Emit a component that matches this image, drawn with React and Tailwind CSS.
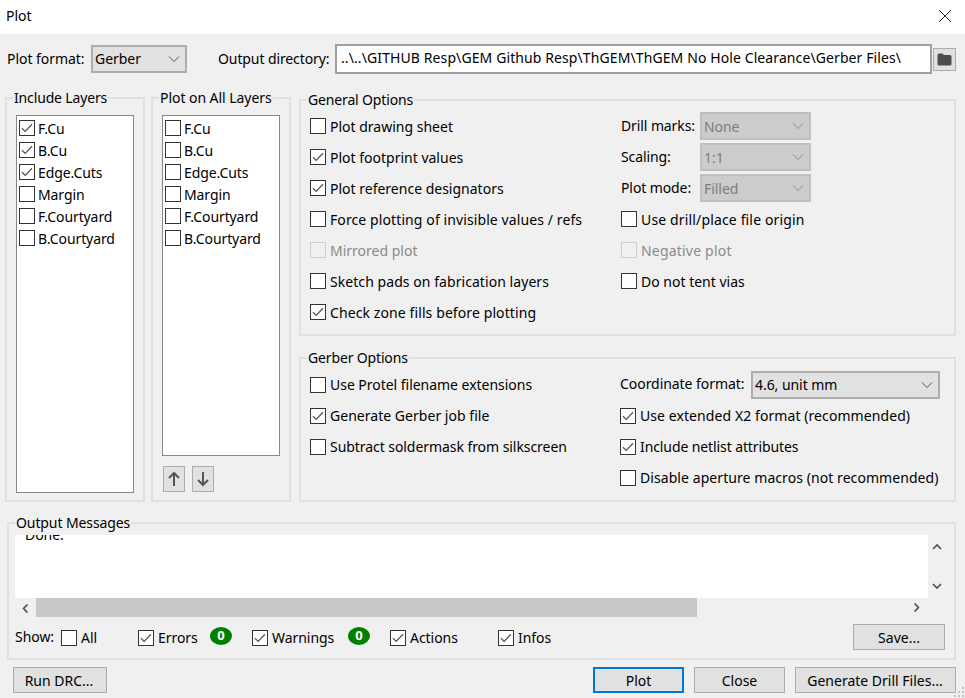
const Check = ({ checked, disabled }) => (
  <span className={`w-4 h-4 shrink-0 border flex items-center justify-center ${disabled ? "border-[#cfcfcf] bg-[#f0f0f0]" : "border-[#333333] bg-white"}`}>
    {checked && (
      <svg width="14" height="14" viewBox="0 0 14 14" fill="none">
        <path d="M2 7.2 L5.2 10.4 L12 3.2" stroke="#555555" strokeWidth="1.3" />
      </svg>
    )}
  </span>
);

const Opt = ({ label, checked, disabled, tc = "tracking-[0px]" }) => (
  <div className={`flex items-center gap-1 h-[30px] mb-[1px] whitespace-nowrap ${disabled ? "text-[#8a8a8a]" : ""}`}>
    <Check checked={checked} disabled={disabled} />
    <span className={tc}>{label}</span>
  </div>
);

const Chevron = ({ color = "#555555" }) => (
  <svg width="12" height="8" viewBox="0 0 12 8" fill="none">
    <path d="M1 1.5 L6 6.5 L11 1.5" stroke={color} strokeWidth="1" />
  </svg>
);

const ScrollChevron = () => (
  <svg width="10" height="6" viewBox="0 0 10 6" fill="none">
    <path d="M1 1 L5 5 L9 1" stroke="#505050" strokeWidth="1.7" />
  </svg>
);

const Select = ({ value, className = "", disabled }) => (
  <div className={`flex items-center justify-between h-7 border-2 pl-[2px] pr-[5px] ${disabled ? "bg-[#cccccc] border-[#bfbfbf] text-[#7d7d7d]" : "bg-[#e1e1e1] border-[#adadad]"} ${className}`}>
    <span className={disabled ? "" : "pb-[2px]"}>{value}</span>
    <Chevron color={disabled ? "#8f8f8f" : "#555555"} />
  </div>
);

const Button = ({ children, className = "" }) => (
  <div className={`flex items-center justify-center h-[26px] bg-[#e1e1e1] border border-[#adadad] tracking-[0px] ${className}`}>{children}</div>
);

const Group = ({ title, titleClass = "", className = "", children }) => (
  <div className={`relative border-2 border-[#e0e0e0] ${className}`}>
    <span className={`absolute top-[-8px] left-[6px] px-[1px] bg-[#f0f0f0] leading-[14px] whitespace-nowrap ${titleClass}`}>{title}</span>
    {children}
  </div>
);

const layers = ["F.Cu", "B.Cu", "Edge.Cuts", "Margin", "F.Courtyard", "B.Courtyard"];

const LayerList = ({ checked = [], className = "" }) => (
  <div className={`w-[118px] bg-white border border-[#828790] pl-[2px] pt-[1px] tracking-[-0.1px] ${className}`}>
    {layers.map((l, i) => (
      <div key={l} className="flex items-center gap-[3px] h-[22px] whitespace-nowrap">
        <Check checked={checked.includes(i)} />
        <span>{l}</span>
      </div>
    ))}
  </div>
);

const FilterCheck = ({ label, w, checked = true }) => (
  <div className={`flex items-center gap-1 shrink-0 h-6 mt-[2px] ${w}`}>
    <Check checked={checked} />
    <span className="pb-[2px]">{label}</span>
  </div>
);

const Badge = ({ w }) => (
  <div className={`shrink-0 mb-[2px] ${w}`}>
    <span className="flex items-center justify-center w-[22px] h-[18px] rounded-[50%] bg-[#008000] text-white text-[13px] font-bold">0</span>
  </div>
);

export default function App() {
  return (
    <div className="relative w-[965px] h-[698px] overflow-hidden flex flex-col bg-[#f0f0f0] text-black text-[14px] tracking-[-0.05px]" style={{ fontFamily: '"Noto Sans", sans-serif' }}>
      <div className="h-[34px] shrink-0 bg-white flex items-center justify-between pl-[6px] pr-[13px] pb-[3px]">
        <span>Plot</span>
        <svg width="14" height="14" viewBox="0 0 14 14" fill="none">
          <path d="M1 1 L13 13 M13 1 L1 13" stroke="#222222" strokeWidth="1" />
        </svg>
      </div>

      <div className="flex items-center h-[30px] mt-[10px] pl-[7px] shrink-0 whitespace-nowrap">
        <span className="w-[84px] pb-[2px]">Plot format:</span>
        <Select value="Gerber" className="w-[96px]" />
        <span className="ml-[31px] w-[117px] pb-[2px] tracking-[-0.1px]">Output directory:</span>
        <div className="w-[597px] h-[30px] bg-white border-2 border-[#a0a0a0] flex items-center pl-[4px] pb-[4px] tracking-[0.1px]">..\..\GITHUB Resp\GEM Github Resp\ThGEM\ThGEM No Hole Clearance\Gerber Files\</div>
        <div className="w-[23px] h-[23px] ml-[1px] bg-[#e1e1e1] border border-[#adadad] flex items-center justify-center">
          <svg width="15" height="13" viewBox="0 0 15 13"><path d="M0.5 2 Q0.5 0.5 2 0.5 H5.5 L7 2 H13 Q14.500 2 14.500 3.500 V11 Q14.500 12.500 13 12.500 H2 Q0.500 12.500 0.500 11 Z" fill="#4d4d4d" /></svg>
        </div>
      </div>

      <div className="flex pl-[5px] mt-[23px] h-[405px] shrink-0">
        <Group title="Include Layers" titleClass="tracking-[-0.15px]" className="w-[140px] h-full pl-[9px] pt-[16px]">
          <LayerList checked={[0, 1, 2]} className="h-[378px]" />
        </Group>
        <Group title="Plot on All Layers" className="w-[140px] h-full ml-[6px] pl-[9px] pt-[16px]">
          <LayerList className="h-[341px]" />
          <div className="flex gap-[7px] mt-[10px] ml-[1px]">
            <div className="w-[22px] h-[26px] bg-[#e1e1e1] border border-[#adadad] flex items-center justify-center"><svg width="14" height="16" viewBox="0 0 14 16" fill="none"><path d="M7 15 V2 M2 7 L7 2 L12 7" stroke="#555555" strokeWidth="2" /></svg></div>
            <div className="w-[22px] h-[26px] bg-[#e1e1e1] border border-[#adadad] flex items-center justify-center"><svg width="14" height="16" viewBox="0 0 14 16" fill="none"><path d="M7 1 V14 M2 9 L7 14 L12 9" stroke="#555555" strokeWidth="2" /></svg></div>
          </div>
        </Group>

        <div className="w-[657px] ml-[8px] pt-[2px] flex flex-col">
          <Group title="General Options" titleClass="tracking-[-0.15px]" className="h-[237px] pl-[9px] pt-[10px] flex">
            <div className="w-[311px]">
              <Opt label="Plot drawing sheet" />
              <Opt label="Plot footprint values" checked />
              <Opt label="Plot reference designators" checked />
              <Opt label="Force plotting of invisible values / refs" tc="tracking-[0.1px]" />
              <Opt label="Mirrored plot" disabled />
              <Opt label="Sketch pads on fabrication layers" tc="tracking-[0.06px]" />
              <Opt label="Check zone fills before plotting" checked tc="tracking-[0.1px]" />
            </div>
            <div>
              {[["Drill marks:", "None"], ["Scaling:", "1:1"], ["Plot mode:", "Filled"]].map(([l, v]) => (
                <div key={l} className="flex items-center h-[30px] mb-[1px]">
                  <span className="w-[79px] whitespace-nowrap pb-[2px] tracking-[-0.1px]">{l}</span>
                  <Select value={v} disabled className="w-[111px]" />
                </div>
              ))}
              <Opt label="Use drill/place file origin" tc="tracking-[0.15px]" />
              <Opt label="Negative plot" disabled tc="tracking-[0.2px]" />
              <Opt label="Do not tent vias" />
            </div>
          </Group>
          <Group title="Gerber Options" titleClass="tracking-[-0.15px]" className="h-[145px] mt-[21px] pl-[9px] pt-[11px] flex">
            <div className="w-[310px]">
              <Opt label="Use Protel filename extensions" tc="tracking-[-0.03px] pb-[2px]" />
              <Opt label="Generate Gerber job file" checked tc="tracking-[0.03px] pb-[2px]" />
              <Opt label="Subtract soldermask from silkscreen" tc="tracking-[-0.06px] pb-[2px]" />
            </div>
            <div>
              <div className="flex items-center h-[30px] mb-[1px]">
                <span className="w-[131px] whitespace-nowrap pb-[4px]">Coordinate format:</span>
                <Select value="4.6, unit mm" className="w-[189px]" />
              </div>
              <Opt label="Use extended X2 format (recommended)" checked tc="tracking-[0.08px] pb-[2px]" />
              <Opt label="Include netlist attributes" checked tc="tracking-[-0.1px] pb-[2px]" />
              <Opt label="Disable aperture macros (not recommended)" tc="tracking-[0.07px] pb-[2px]" />
            </div>
          </Group>
        </div>
      </div>

      <Group title="Output Messages" titleClass="tracking-[-0.1px]" className="w-[949px] h-[138px] ml-[7px] mt-[20px] shrink-0 pl-[6px] pt-[11px]">
        <div className="flex">
          <div className="w-[913px] h-[63px] bg-white overflow-hidden pl-[10px] leading-[10px]">
            <div className="mt-[-5px]">Done.</div>
          </div>
          <div className="w-[18px] flex flex-col items-center justify-between pt-[9px] pb-[9px]">
            <span className="rotate-180 flex"><ScrollChevron /></span>
            <ScrollChevron />
          </div>
        </div>
        <div className="flex items-center w-[913px] h-[19px]">
          <span className="w-[21px] flex justify-center rotate-90"><ScrollChevron /></span>
          <div className="w-[661px] h-full bg-[#c8c8c8]"></div>
          <span className="ml-auto w-[21px] flex justify-center -rotate-90 mr-[1px]"><ScrollChevron /></span>
        </div>
        <div className="flex items-center mt-[7px] h-[26px]">
          <span className="w-[46px] mb-[2px]">Show:</span>
          <FilterCheck label="All" w="w-[77px]" checked={false} />
          <FilterCheck label="Errors" w="w-[72px]" />
          <Badge w="w-[42px]" />
          <FilterCheck label="Warnings" w="w-[96px]" />
          <Badge w="w-[42px]" />
          <FilterCheck label="Actions" w="w-[108px]" />
          <FilterCheck label="Infos" w="w-[355px]" />
          <Button className="w-[92px]">Save...</Button>
        </div>
      </Group>

      <div className="flex mt-[7px] pl-[13px] shrink-0">
        <Button className="w-[94px] pr-[2px]">Run DRC...</Button>
        <Button className="w-[91px] ml-[486px] border-2 !border-[#0078d7]">Plot</Button>
        <Button className="w-[91px] ml-[10px]">Close</Button>
        <Button className="w-[161px] ml-[10px] pr-[1px]">Generate Drill Files...</Button>
      </div>

      <div className="absolute right-0 bottom-0 w-[11px] h-[11px]">
        <svg width="11" height="11" viewBox="0 0 11 11" fill="#c4c4c4">
          <rect x="8" y="0" width="2" height="2" /><rect x="4" y="4" width="2" height="2" /><rect x="8" y="4" width="2" height="2" />
          <rect x="0" y="8" width="2" height="2" /><rect x="4" y="8" width="2" height="2" /><rect x="8" y="8" width="2" height="2" />
        </svg>
      </div>
    </div>
  );
}
